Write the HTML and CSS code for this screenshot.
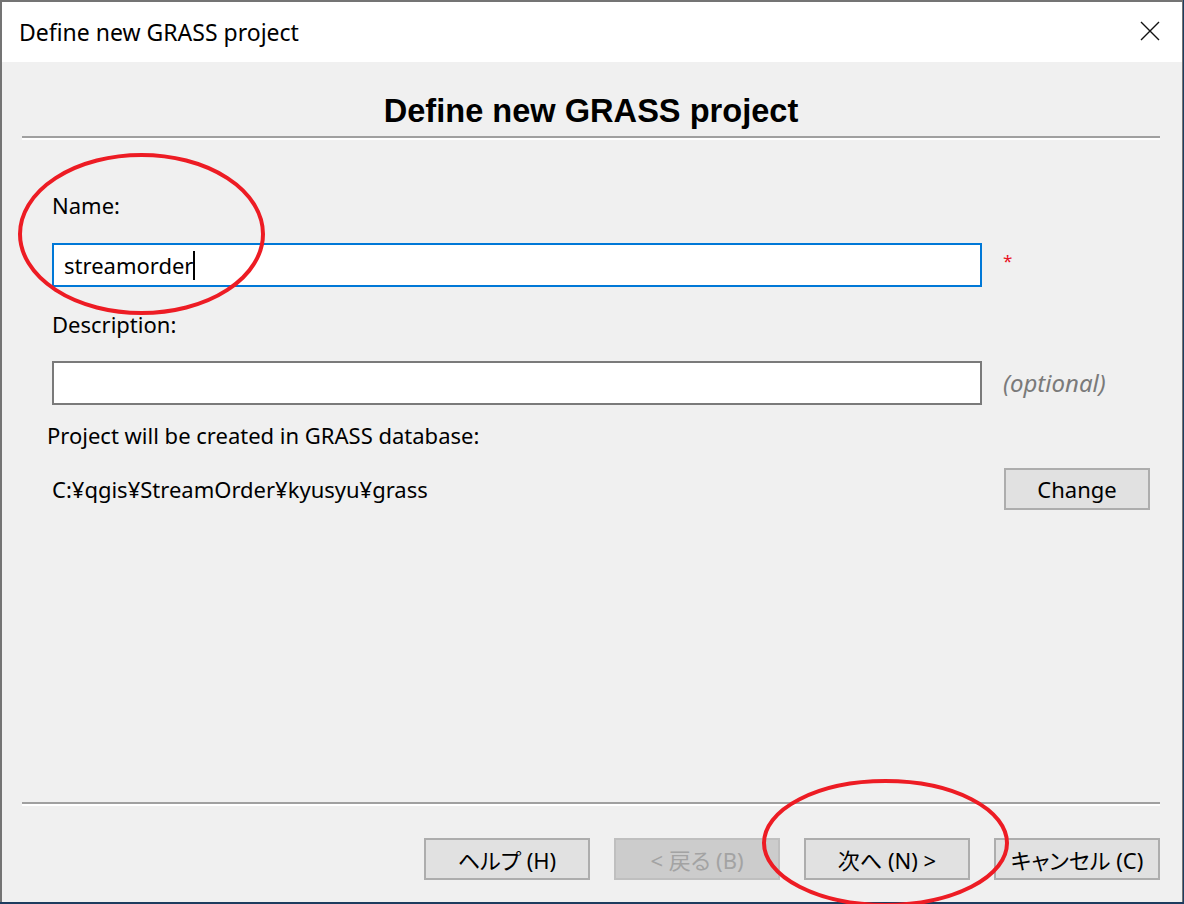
FILE: index.html
```html
<!DOCTYPE html>
<html lang="ja">
<head>
    <meta charset="UTF-8">
    <meta name="viewport" content="width=device-width, initial-scale=1.0">
    <title>Define new GRASS project</title>
    <link rel="stylesheet" href="styles.css">
</head>
<body>
    <div class="window">
        <!-- Title bar -->
        <div class="titlebar">
            <span class="title">Define new GRASS project</span>
            <svg class="close" width="20" height="20" viewBox="0 0 20 20">
                <path d="M1 1 L19 19 M19 1 L1 19" stroke="#111" stroke-width="1.4" fill="none"/>
            </svg>
        </div>

        <div class="page">
            <h1 class="heading">Define new GRASS project</h1>
            <div class="sep"></div>

            <div class="form">
                <div class="label">Name:</div>
                <div class="row">
                    <div class="field active"><span>streamorder</span><span class="caret"></span></div>
                    <span class="req">*</span>
                </div>

                <div class="label">Description:</div>
                <div class="row">
                    <div class="field"></div>
                    <span class="hint">(optional)</span>
                </div>

                <div class="label location">Project will be created in GRASS database:</div>
                <div class="row path-row">
                    <span class="path">C:¥qgis¥StreamOrder¥kyusyu¥grass</span>
                    <button class="btn change">Change</button>
                </div>
            </div>

            <div class="spacer"></div>
            <div class="sep"></div>

            <div class="buttons">
                <button class="btn">ヘルプ (H)</button>
                <button class="btn disabled">&lt; 戻る (B)</button>
                <button class="btn">次へ (N) &gt;</button>
                <button class="btn">キャンセル (C)</button>
            </div>
        </div>
    </div>

    <!-- Red annotation marks drawn over the dialog -->
    <svg class="marks" width="1184" height="904" viewBox="0 0 1184 904">
        <ellipse cx="141.5" cy="234" rx="121.5" ry="79" fill="none" stroke="#ed1c24" stroke-width="4"/>
        <ellipse cx="885.5" cy="843" rx="121.5" ry="62" fill="none" stroke="#ed1c24" stroke-width="4"/>
    </svg>
</body>
</html>
```

FILE: styles.css
```css
body {
    margin: 0;
    width: 1184px;
    height: 904px;
    background-color: #1d3c5f;
    font-family: "Noto Sans", "Noto Sans CJK JP", sans-serif;
    font-size: 22px;
    color: #000;
    overflow: hidden;
    position: relative;
}

.window {
    width: 1183px;
    height: 902px;
    box-sizing: border-box;
    border-top: 2px solid #747474;
    border-left: 2px solid #747474;
    border-right: 1px solid #747474;
    background-color: #f0f0f0;
    display: flex;
    flex-direction: column;
}

.titlebar {
    height: 60px;
    flex: none;
    background-color: #fff;
    display: flex;
    align-items: center;
    justify-content: space-between;
    padding: 0 22px 0 17px;
}

.title {
    font-size: 23px;
    margin-top: 0;
}

.close {
    margin-top: -3px;
}

.page {
    flex: 1;
    display: flex;
    flex-direction: column;
    padding: 0 22px 22px 20px;
}

.heading {
    margin: 29px 0 5px 0;
    font-family: "Liberation Sans", Arial, sans-serif;
    font-size: 32.6px;
    line-height: 40px;
    font-weight: bold;
    text-align: center;
}

.sep {
    height: 0;
    border-top: 2px solid #a0a0a0;
    border-bottom: 2px solid #fff;
}

.form {
    padding-left: 30px;
}

.label {
    line-height: 28px;
    margin-top: 23px;
    margin-bottom: 23px;
}

.form > .label:first-child {
    margin-top: 51px;
    margin-bottom: 24px;
}

.row {
    display: flex;
    align-items: center;
    line-height: 28px;
}

.field {
    width: 930px;
    height: 44px;
    box-sizing: border-box;
    border: 2px solid #7a7a7a;
    background-color: #fff;
    padding-left: 10px;
    display: flex;
    align-items: center;
}

.field.active {
    border-color: #0078d7;
}

.caret {
    display: inline-block;
    width: 2px;
    height: 29px;
    background-color: #000;
}

.req {
    align-self: flex-start;
    margin: 4px 0 0 21px;
    font-size: 17px;
    color: #e81123;
}

.hint {
    margin-left: 21px;
    font-size: 24px;
    font-style: italic;
    color: #7a7a7a;
}

.label.location {
    margin: 16px 0 19px -5px;
}

.path-row {
    justify-content: space-between;
    margin-right: 10px;
}

.btn {
    width: 166px;
    height: 42px;
    box-sizing: border-box;
    border: 2px solid #adadad;
    background-color: #e1e1e1;
    font-family: "Noto Sans", "Noto Sans CJK JP", sans-serif;
    font-size: 22px;
    font-feature-settings: "palt";
    color: #000;
    padding: 0;
    white-space: nowrap;
}

.btn.change {
    width: 146px;
}

.btn.disabled {
    background-color: #cccccc;
    border-color: #bfbfbf;
    color: #a3a3a3;
}

.spacer {
    flex: 1;
}

.buttons {
    display: flex;
    justify-content: flex-end;
    gap: 24px;
    margin-top: 32px;
}

.marks {
    position: absolute;
    left: 0;
    top: 0;
    pointer-events: none;
}
```
